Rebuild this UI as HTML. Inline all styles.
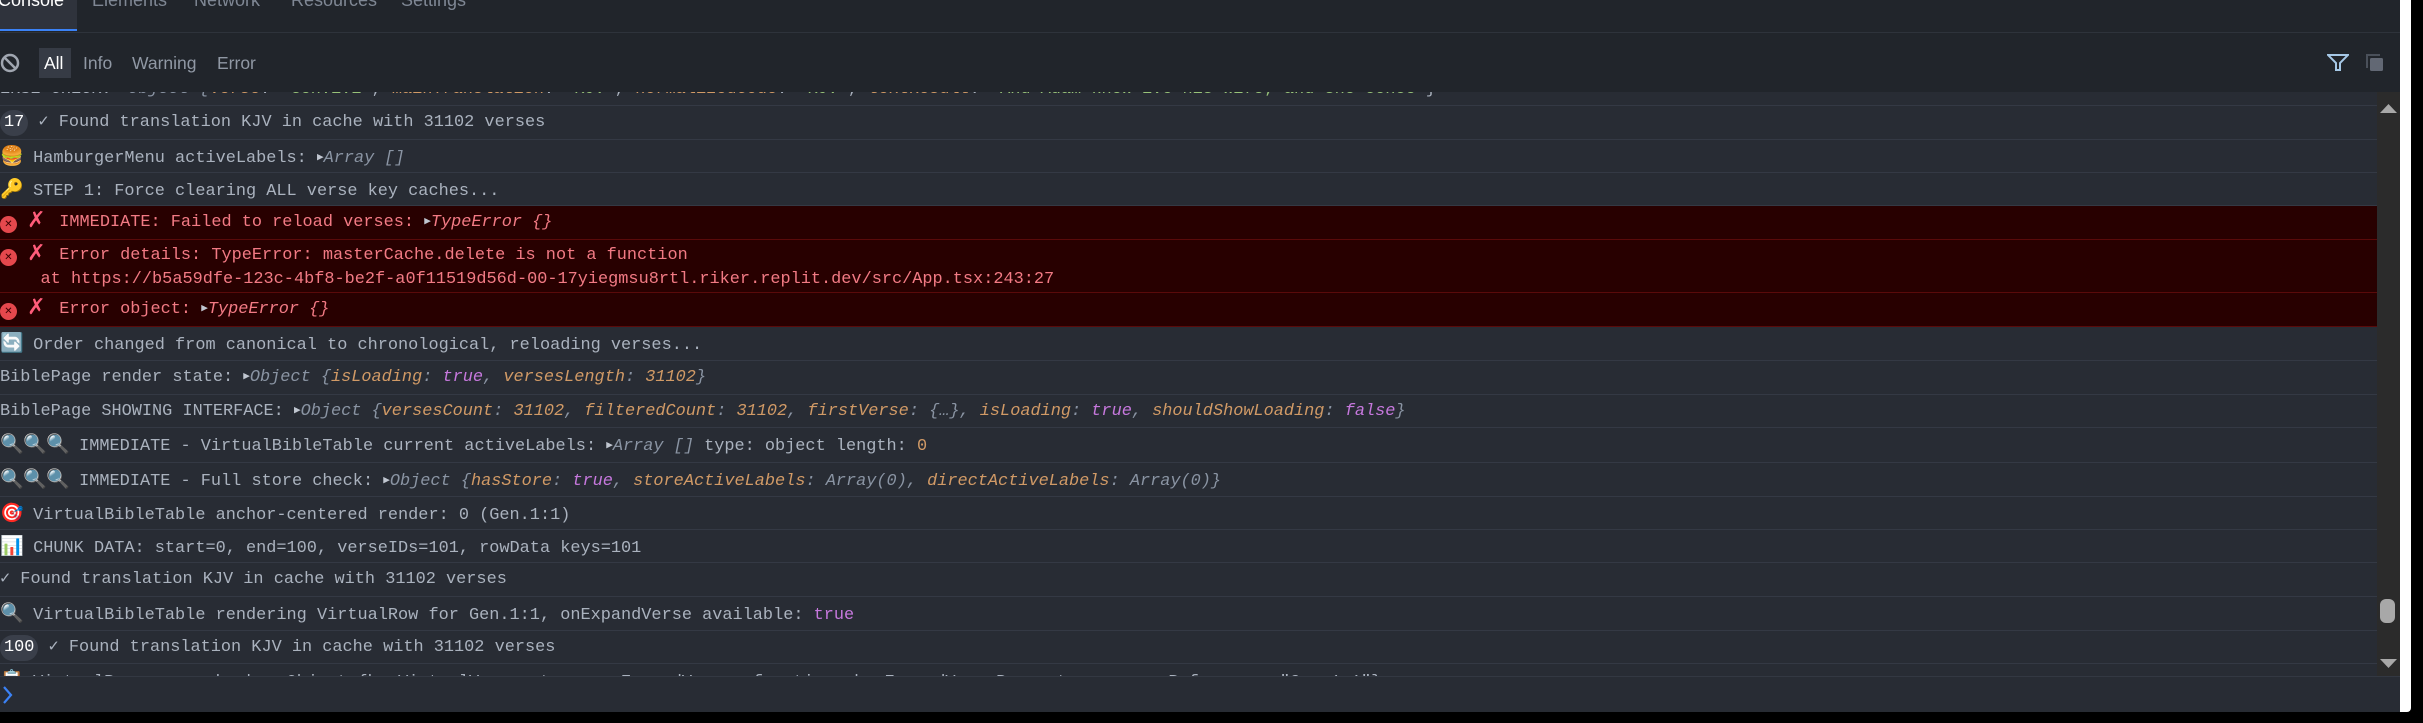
<!DOCTYPE html>
<html><head><meta charset="utf-8"><style>
*{margin:0;padding:0;box-sizing:border-box}
body{width:2423px;height:723px;background:#000;overflow:hidden;position:relative;font-family:"Liberation Sans",sans-serif}
#panel{position:absolute;left:0;top:0;width:2400px;height:712px;background:#21252b;overflow:hidden}
#white{position:absolute;left:2400px;top:0;width:11px;height:712px;background:#fff;border-radius:0 0 4px 0}
.tabs{position:absolute;left:0;top:0;width:2400px;height:33px;border-bottom:1px solid #2e333b}
.tab{position:absolute;top:-10px;font-size:18px;color:#7f8794}
.tab.act{color:#fff}
.tabbg{position:absolute;left:0;top:0;width:77px;height:31px;background:#2f333c;border-bottom:2px solid #3b82f6}
.fbar .f{position:absolute;top:53px;font-size:17.5px;color:#9098a4}
.allbg{position:absolute;left:39px;top:48px;width:32px;height:30px;background:#363b45}
#log{position:absolute;left:0;top:92px;width:2377px;height:584px;background:#282c34;overflow:hidden}
.r{position:absolute;left:0;width:2377px;border-bottom:1px solid #343944;font-family:"Liberation Mono",monospace;font-size:16.9px;color:#aab2be;white-space:pre;line-height:33px}
.e{background:#280000;border-bottom:1px solid #5a0a0a;color:#f27a84}
.o{color:#d19a66;font-style:italic}
.k{color:#d19a66}
.p{color:#c678dd;font-style:italic}
.g{color:#8a94a3;font-style:italic}
.s{color:#98c379}
.tri{font-size:11px;color:#c0c6d0;font-style:normal;vertical-align:2px}
.badge{display:inline-block;background:#3a3f4a;color:#fff;border-radius:14px;line-height:26px;padding:0 4px;margin-top:3px}
.em{font-family:"DejaVu Sans",sans-serif;font-size:19px;display:inline-block;width:23px}
.ei{display:inline-block;width:17px;height:17px;border-radius:50%;background:#e5484d;color:#3a0000;font-size:10px;line-height:17px;text-align:center;vertical-align:-1px;font-family:"DejaVu Sans",sans-serif}
.ex{color:#ff5c7a;font-family:"DejaVu Sans",sans-serif;font-size:22px;font-weight:bold;display:inline-block;width:22px;line-height:20px;vertical-align:-1px}
.ic{position:absolute}
#sb{position:absolute;left:2377px;top:92px;width:23px;height:584px;background:#2b2b2b}
#inp{position:absolute;left:0;top:676px;width:2400px;height:36px;background:#282c34;border-top:1px solid #333842}
</style></head><body>
<div id="panel">
 <div class="tabs">
  <div class="tabbg"></div>
  <div class="tab act" style="left:-2px">Console</div>
  <div class="tab" style="left:92px">Elements</div>
  <div class="tab" style="left:194px">Network</div>
  <div class="tab" style="left:291px">Resources</div>
  <div class="tab" style="left:401px">Settings</div>
 </div>
 <div class="fbar">
  <svg class="ic" style="left:0;top:53px" width="20" height="20" viewBox="0 0 20 20"><circle cx="10" cy="10" r="8" fill="none" stroke="#a0a6b0" stroke-width="2.5"/><line x1="4.5" y1="4.5" x2="15.5" y2="15.5" stroke="#a0a6b0" stroke-width="2.5"/></svg>
  <div class="allbg"></div>
  <div class="f" style="left:44px;color:#fff">All</div>
  <div class="f" style="left:83px">Info</div>
  <div class="f" style="left:132px">Warning</div>
  <div class="f" style="left:217px">Error</div>
  <svg class="ic" style="left:2327px;top:53px" width="22" height="20" viewBox="0 0 22 20"><path d="M1 2 H21 L13 10 V17 H9 V10 Z" fill="none" stroke="#a6c8e6" stroke-width="2"/></svg>
  <svg class="ic" style="left:2365px;top:53px" width="20" height="20" viewBox="0 0 20 20"><path d="M2 15 V2 H15" fill="none" stroke="#4a505a" stroke-width="2"/><rect x="5" y="5" width="13" height="13" rx="1.5" fill="#626874"/></svg>
 </div>
 <div id="log">
  <div class="r" style="top:-19px;height:33px">ERSE CHECK: <span class="tri">▶</span><span class="g">Object {</span><span class="k">verse</span>: <span class="s">"Gen.1:1"</span>, <span class="k">mainTranslation</span>: <span class="s">"KJV"</span>, <span class="k">normalizedCode</span>: <span class="s">"KJV"</span>, <span class="k">textResult</span>: <span class="s">"And Adam knew Eve his wife; and she conce</span>"}</div>
  <div class="r" style="top:14px;height:34px"><span class="badge">17</span> ✓ Found translation KJV in cache with 31102 verses</div>
  <div class="r" style="top:48px;height:33px"><span class="em">🍔</span> HamburgerMenu activeLabels: <span class="tri">▶</span><span class="g">Array []</span></div>
  <div class="r" style="top:81px;height:33px"><span class="em">🔑</span> STEP 1: Force clearing ALL verse key caches...</div>
  <div class="r e" style="top:114px;height:34px"><span class="ei">✕</span> <span class="ex">✗</span> IMMEDIATE: Failed to reload verses: <span class="tri">▶</span><span style="font-style:italic">TypeError {}</span></div>
  <div class="r e" style="top:148px;height:53px;line-height:24px;padding-top:4px"><span class="ei">✕</span> <span class="ex">✗</span> Error details: TypeError: masterCache.delete is not a function
    at https://b5a59dfe-123c-4bf8-be2f-a0f11519d56d-00-17yiegmsu8rtl.riker.replit.dev/src/App.tsx:243:27</div>
  <div class="r e" style="top:201px;height:34px"><span class="ei">✕</span> <span class="ex">✗</span> Error object: <span class="tri">▶</span><span style="font-style:italic">TypeError {}</span></div>
  <div class="r" style="top:235px;height:34px"><span class="em">🔄</span> Order changed from canonical to chronological, reloading verses...</div>
  <div class="r" style="top:269px;height:34px">BiblePage render state: <span class="tri">▶</span><span class="g">Object {</span><span class="o">isLoading</span><span class="g">: </span><span class="p">true</span><span class="g">, </span><span class="o">versesLength</span><span class="g">: </span><span class="o">31102</span><span class="g">}</span></div>
  <div class="r" style="top:303px;height:33px">BiblePage SHOWING INTERFACE: <span class="tri">▶</span><span class="g">Object {</span><span class="o">versesCount</span><span class="g">: </span><span class="o">31102</span><span class="g">, </span><span class="o">filteredCount</span><span class="g">: </span><span class="o">31102</span><span class="g">, </span><span class="o">firstVerse</span><span class="g">: {…}, </span><span class="o">isLoading</span><span class="g">: </span><span class="p">true</span><span class="g">, </span><span class="o">shouldShowLoading</span><span class="g">: </span><span class="p">false</span><span class="g">}</span></div>
  <div class="r" style="top:336px;height:35px"><span class="em">🔍</span><span class="em">🔍</span><span class="em">🔍</span> IMMEDIATE - VirtualBibleTable current activeLabels: <span class="tri">▶</span><span class="g">Array []</span> type: object length: <span class="k">0</span></div>
  <div class="r" style="top:371px;height:34px"><span class="em">🔍</span><span class="em">🔍</span><span class="em">🔍</span> IMMEDIATE - Full store check: <span class="tri">▶</span><span class="g">Object {</span><span class="o">hasStore</span><span class="g">: </span><span class="p">true</span><span class="g">, </span><span class="o">storeActiveLabels</span><span class="g">: Array(0), </span><span class="o">directActiveLabels</span><span class="g">: Array(0)}</span></div>
  <div class="r" style="top:405px;height:33px"><span class="em">🎯</span> VirtualBibleTable anchor-centered render: 0 (Gen.1:1)</div>
  <div class="r" style="top:438px;height:33px"><span class="em">📊</span> CHUNK DATA: start=0, end=100, verseIDs=101, rowData keys=101</div>
  <div class="r" style="top:471px;height:34px">✓ Found translation KJV in cache with 31102 verses</div>
  <div class="r" style="top:505px;height:34px"><span class="em">🔍</span> VirtualBibleTable rendering VirtualRow for Gen.1:1, onExpandVerse available: <span style="color:#c678dd">true</span></div>
  <div class="r" style="top:539px;height:33px"><span class="badge">100</span> ✓ Found translation KJV in cache with 31102 verses</div>
  <div class="r" style="top:572px;height:33px;border:none"><span class="em">📋</span> VirtualRow props check: ▶Object {hasVirtualVerse: true, onExpandVerse: function, hasExpandVerseProp: true, verseReference: "Gen.1:1"}</div>
 </div>
 <div id="sb">
  <svg class="ic" style="left:2px;top:10px" width="19" height="12"><path d="M1 11 L9.5 2 L18 11 Z" fill="#a8a8a8"/></svg>
  <div style="position:absolute;left:3px;top:507px;width:15px;height:24px;border-radius:6px;background:#a8a8a8"></div>
  <svg class="ic" style="left:2px;top:566px" width="19" height="12"><path d="M1 1 L9.5 10 L18 1 Z" fill="#a8a8a8"/></svg>
 </div>
 <div id="inp"><svg class="ic" style="left:2px;top:8px" width="12" height="20"><path d="M2 2 L9 10 L2 18" fill="none" stroke="#3b82f6" stroke-width="2.2"/></svg></div>
</div>
<div id="white"></div>
</body></html>
